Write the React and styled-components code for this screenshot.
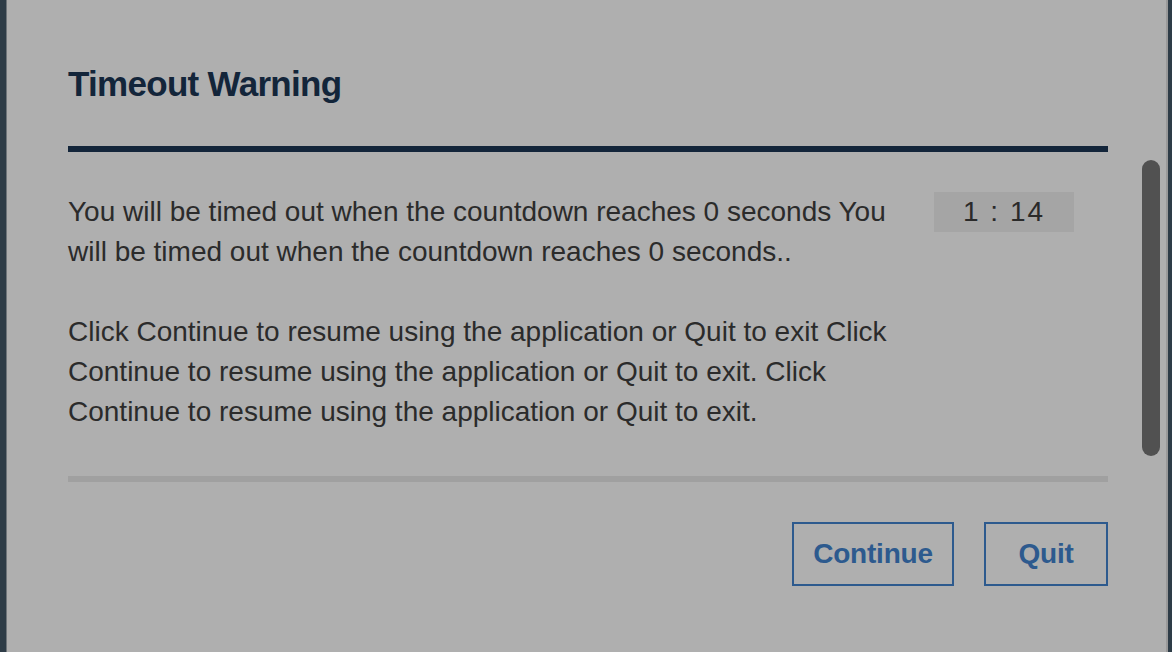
import React from "react";
import styled, { createGlobalStyle } from "styled-components";

const GlobalStyle = createGlobalStyle`
  html, body {
    margin: 0;
    padding: 0;
    background: #afafaf;
  }
  #root {
    height: 652px;
  }
`;

const Page = styled.div`
  display: flex;
  width: 1172px;
  height: 652px;
  overflow: hidden;
  font-family: "Liberation Sans", Arial, sans-serif;
`;

const Edge = styled.div`
  flex: 0 0 ${props => props.$width}px;
  background: #2e3c47;
  border-${props => props.$side}: ${props => props.$line};
`;

const Dialog = styled.div`
  position: relative;
  flex: 1;
  background: #afafaf;
  padding: 64px 58px 0 61px;
`;

const Title = styled.h2`
  margin: 0;
  font-size: 35px;
  line-height: 40px;
  font-weight: 700;
  letter-spacing: -0.7px;
  color: #13253a;
`;

const Rule = styled.div`
  height: 6px;
  background: ${props => props.$color};
  margin-top: ${props => props.$top}px;
`;

const Body = styled.div`
  display: flex;
  align-items: flex-start;
  justify-content: space-between;
  margin-top: 40px;
`;

const Message = styled.div`
  width: 840px;
  font-size: 28px;
  line-height: 40px;
  color: #2b2b2b;

  p {
    margin: 0 0 40px;
  }
  p:last-child {
    margin-bottom: 0;
  }
`;

const Timer = styled.div`
  width: 140px;
  height: 40px;
  margin-right: 34px;
  background: #a5a5a5;
  color: #2a2a2a;
  font-size: 28px;
  line-height: 40px;
  letter-spacing: 2px;
  text-align: center;
  white-space: pre;
`;

const Actions = styled.div`
  display: flex;
  justify-content: flex-end;
  gap: 30px;
  margin-top: 40px;
`;

const Button = styled.button`
  width: ${props => props.$width}px;
  height: 64px;
  padding: 0;
  background: transparent;
  border: 2px solid #2d5a8e;
  color: #2d5a8e;
  font-family: "Liberation Sans", Arial, sans-serif;
  font-size: 28px;
  font-weight: 700;
  letter-spacing: -0.2px;
  cursor: pointer;
`;

const ScrollThumb = styled.div`
  position: absolute;
  top: 160px;
  left: 1135px;
  width: 18px;
  height: 296px;
  border-radius: 9px;
  background: #515151;
`;

const App = () => {
  return (
    <>
      <GlobalStyle />
      <Page>
        <Edge $width={6} $side="right" $line="1px solid #6f757a" />
        <Dialog>
          <Title>Timeout Warning</Title>
          <Rule $color="#13253a" $top={42} />
          <Body>
            <Message>
              <p>
                You will be timed out when the countdown reaches 0 seconds You
                will be timed out when the countdown reaches 0 seconds..
              </p>
              <p>
                Click Continue to resume using the application or Quit to exit
                Click Continue to resume using the application or Quit to exit.
                Click Continue to resume using the application or Quit to exit.
              </p>
            </Message>
            <Timer>1 : 14</Timer>
          </Body>
          <Rule $color="#a0a0a0" $top={44} />
          <Actions>
            <Button $width={162} type="button">
              Continue
            </Button>
            <Button $width={124} type="button">
              Quit
            </Button>
          </Actions>
          <ScrollThumb />
        </Dialog>
        <Edge $width={4} $side="left" $line="2px solid #999999" />
      </Page>
    </>
  );
};

export default App;
